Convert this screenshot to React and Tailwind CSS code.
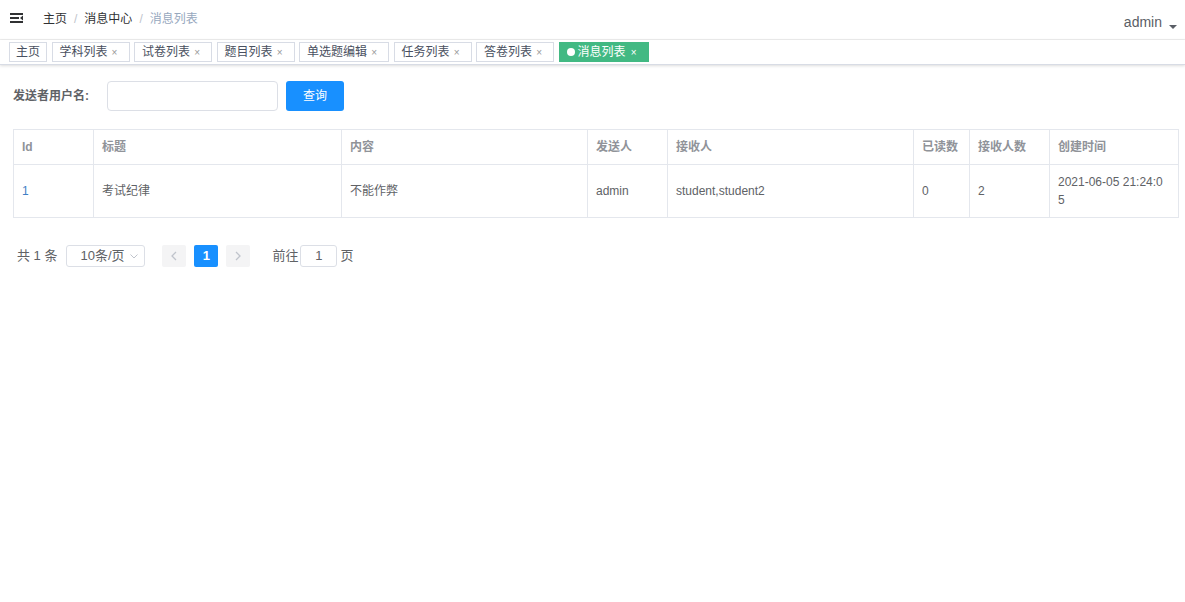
import { useState } from 'react';

const font = { fontFamily: '"Liberation Sans", "Noto Sans CJK SC", sans-serif' };

const tags = [
  { name: '学科列表' },
  { name: '试卷列表' },
  { name: '题目列表' },
  { name: '单选题编辑' },
  { name: '任务列表' },
  { name: '答卷列表' },
];

const cols = [
  { label: 'Id', w: 'w-[80px]' },
  { label: '标题', w: 'w-[248px]' },
  { label: '内容', w: 'w-[246px]' },
  { label: '发送人', w: 'w-[80px]' },
  { label: '接收人', w: 'w-[246px]' },
  { label: '已读数', w: 'w-[56px]' },
  { label: '接收人数', w: 'w-[80px]' },
  { label: '创建时间', w: 'w-[129px]' },
];

function Hamburger() {
  return (
    <svg width="14" height="10" viewBox="0 0 14 10" className="block">
      <rect x="0" y="0" width="13" height="2" fill="#303133" />
      <rect x="0" y="4" width="9" height="2" fill="#303133" />
      <polygon points="13,2.5 13,7.5 10,5" fill="#303133" />
      <rect x="0" y="8" width="13" height="2" fill="#303133" />
    </svg>
  );
}

function Tag({ name, active }) {
  if (active) {
    return (
      <div className="ml-[4.5px] h-[20px] flex items-center px-[7px] bg-[#42b983] border border-[#42b983] text-white text-[12px]">
        <span className="w-[8px] h-[8px] rounded-full bg-white mr-[3px]" />
        <span>{name}</span>
        <span className="w-[14px] text-center text-[10px] ml-[1px]">×</span>
      </div>
    );
  }
  return (
    <div className="ml-[4.5px] h-[20px] flex items-center px-[7px] bg-white border border-[#d8dce5] text-[#495060] text-[12px]">
      <span>{name}</span>
      <span className="w-[14px] text-center text-[10px] text-[#999]">×</span>
    </div>
  );
}

export default function App() {
  const [name, setName] = useState('');

  return (
    <div className="w-[1185px] h-[602px] bg-white overflow-hidden" style={font}>
      {/* navbar */}
      <div className="h-[40px] flex items-center justify-between border-b border-[#f0f0f0]">
        <div className="flex items-center">
          <div className="pl-[10px] pr-[19px] pb-[3px]"><Hamburger /></div>
          <div className="flex items-center text-[12px] pb-[2px]">
            <span className="text-[#303133]">主页</span>
            <span className="mx-[7px] text-[#c0c4cc]">/</span>
            <span className="text-[#303133]">消息中心</span>
            <span className="mx-[7px] text-[#c0c4cc]">/</span>
            <span className="text-[#97a8be]">消息列表</span>
          </div>
        </div>
        <div className="flex items-center pr-[8px] pt-[6px]">
          <span className="text-[14px] text-[#5a5e66]">admin</span>
          <span className="ml-[7px] mt-[8px] w-0 h-0 border-l-[4px] border-r-[4px] border-t-[4px] border-l-transparent border-r-transparent border-t-[#5a5e66]" />
        </div>
      </div>

      {/* tags view */}
      <div className="h-[25px] flex items-start pt-[2px] border-b border-[#d8dce5] shadow-[0_1px_3px_0_rgba(0,0,0,0.12),0_0_3px_0_rgba(0,0,0,0.04)]">
        <div className="ml-[9px] h-[20px] flex items-center px-[6px] bg-white border border-[#d8dce5] text-[#495060] text-[12px]">主页</div>
        {tags.map((t) => <Tag key={t.name} name={t.name} />)}
        <Tag name="消息列表" active />
      </div>

      {/* content */}
      <div className="px-[13px] pt-[16px]">
        <div className="flex items-center h-[30px]">
          <label className="w-[94px] text-[12px] font-bold text-[#606266]">发送者用户名:</label>
          <input
            className="w-[171px] h-[30px] border border-[#dcdfe6] rounded-[4px] px-[10px] text-[12px] outline-none"
            value={name}
            onChange={(e) => setName(e.target.value)}
          />
          <button className="ml-[8px] w-[58px] h-[30px] rounded-[3px] bg-[#1890ff] text-white text-[12px]">查询</button>
        </div>

        <table className="mt-[18px] w-[1165px] table-fixed border-collapse text-[12px]">
          <thead>
            <tr className="h-[35px]">
              {cols.map((c) => (
                <th key={c.label} className={`${c.w} border border-[#e4e7ed] px-[8px] text-left font-bold text-[#909399]`}>{c.label}</th>
              ))}
            </tr>
          </thead>
          <tbody>
            <tr className="h-[53px] text-[#606266]">
              <td className="border border-[#e4e7ed] px-[8px] text-[#3f7fc5]">1</td>
              <td className="border border-[#e4e7ed] px-[8px]">考试纪律</td>
              <td className="border border-[#e4e7ed] px-[8px]">不能作弊</td>
              <td className="border border-[#e4e7ed] px-[8px]">admin</td>
              <td className="border border-[#e4e7ed] px-[8px]">student,student2</td>
              <td className="border border-[#e4e7ed] px-[8px]">0</td>
              <td className="border border-[#e4e7ed] px-[8px]">2</td>
              <td className="border border-[#e4e7ed] pl-[8px] pr-[14px] leading-[18px] break-all">2021-06-05 21:24:05</td>
            </tr>
          </tbody>
        </table>

        {/* pagination */}
        <div className="mt-[27px] flex items-center text-[13px] text-[#606266]">
          <span className="ml-[4px]">共 1 条</span>
          <div className="ml-[9px] w-[79px] h-[22px] border border-[#dcdfe6] rounded-[3px] flex items-center pl-[13px] pr-[6px] justify-between">
            <span>10条/页</span>
            <svg width="8" height="5" viewBox="0 0 8 5"><path d="M0.5 0.5 L4 4 L7.5 0.5" fill="none" stroke="#c0c4cc" strokeWidth="1" /></svg>
          </div>
          <div className="ml-[17px] w-[24px] h-[22px] bg-[#f4f4f5] rounded-[2px] flex items-center justify-center">
            <svg width="6" height="10" viewBox="0 0 6 10"><path d="M5 1 L1 5 L5 9" fill="none" stroke="#c0c4cc" strokeWidth="1.3" /></svg>
          </div>
          <div className="ml-[8px] w-[24px] h-[22px] bg-[#1890ff] rounded-[2px] flex items-center justify-center text-white font-bold">1</div>
          <div className="ml-[8px] w-[24px] h-[22px] bg-[#f4f4f5] rounded-[2px] flex items-center justify-center">
            <svg width="6" height="10" viewBox="0 0 6 10"><path d="M1 1 L5 5 L1 9" fill="none" stroke="#c0c4cc" strokeWidth="1.3" /></svg>
          </div>
          <span className="ml-[22px]">前往</span>
          <div className="ml-[2px] w-[37px] h-[22px] border border-[#dcdfe6] rounded-[3px] flex items-center justify-center">1</div>
          <span className="ml-[3px]">页</span>
        </div>
      </div>
    </div>
  );
}
